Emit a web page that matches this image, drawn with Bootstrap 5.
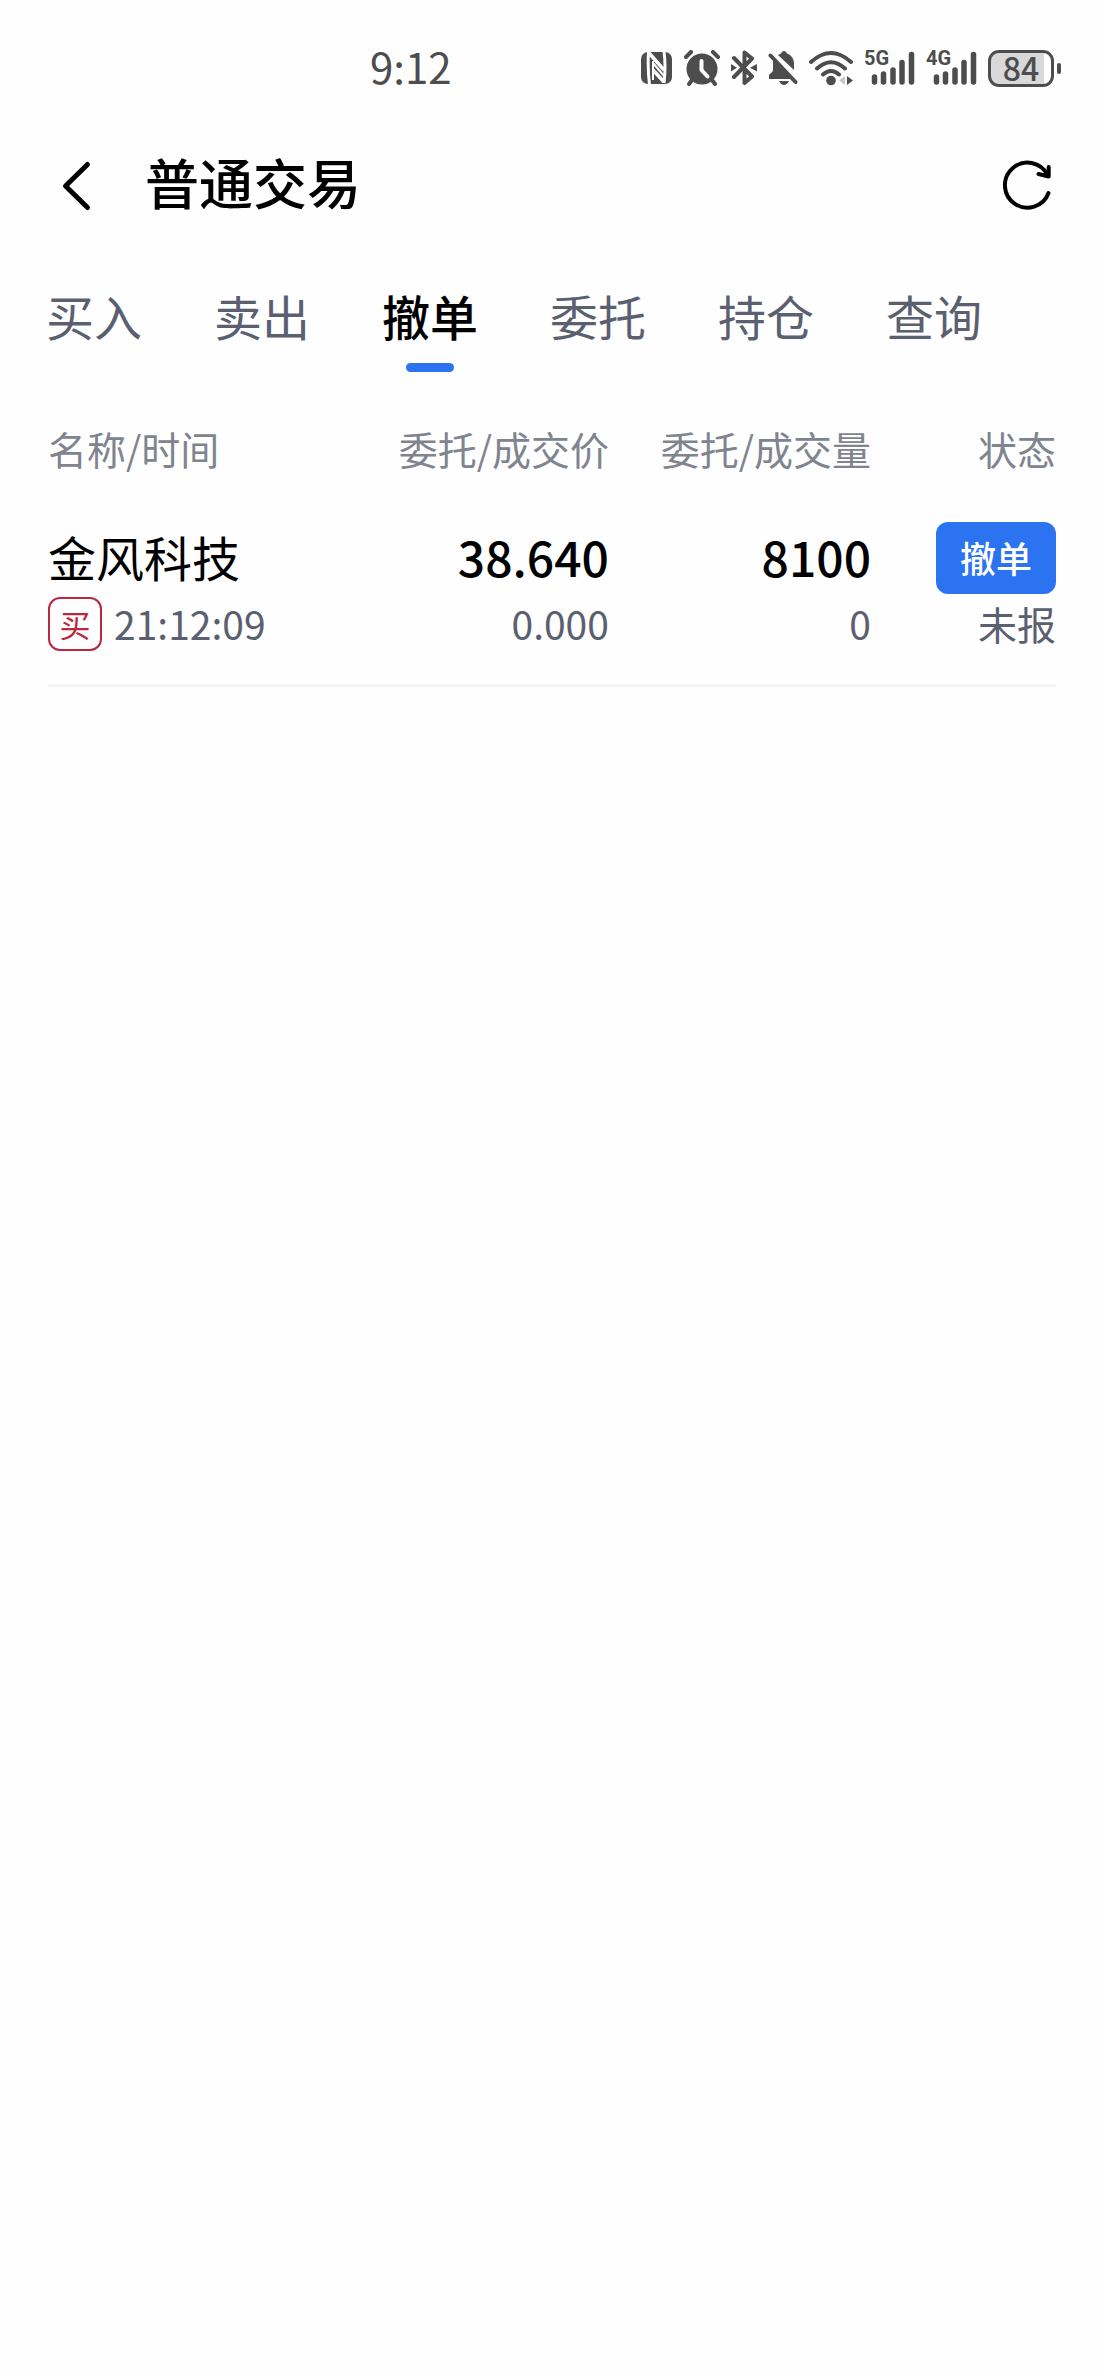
<!DOCTYPE html>
<html lang="zh-CN">
<head>
<meta charset="utf-8">
<meta name="viewport" content="width=device-width, initial-scale=1">
<title>普通交易</title>
<link href="https://cdn.jsdelivr.net/npm/bootstrap@5.3.0/dist/css/bootstrap.min.css" rel="stylesheet">
<style>
:root { --ink: #4d4d4d; --slate: #5b6070; --muted: #80848f; --blue: #2b73f0; --red: #b8283f; }
body { font-family: "Noto Sans CJK SC", "Noto Sans", sans-serif; color: #000; background: #fefefe; }
.semi { font-weight: 500; }
.status-bar { height: 136px; padding: 0 43px 0 370px; color: var(--ink); }
.status-icons { gap: 11px; }
.clock { font-size: 42px; line-height: 48px; padding-bottom: 4px; }
.net-label { font: bold 20px/22px "Liberation Sans Narrow", "Roboto", sans-serif; top: -3px; left: 0; }
.battery { width: 66px; height: 37px; border: 3px solid var(--ink); border-radius: 11px; background: linear-gradient(to right, #d9d9d9 88%, transparent 88%); font-size: 32px; line-height: 28px; padding-bottom: 3px; }
.battery-tip { width: 4px; height: 11px; border-radius: 2px; background: var(--ink); margin-left: 3px; }
.title-bar { height: 100px; padding: 0 47px 0 60px; }
.title-bar h1 { font-size: 54px; line-height: 60px; margin-left: 52px; padding-bottom: 8px; }
.trade-tabs { gap: 72px; padding: 43px 46px 0; }
.trade-tabs .nav-link { padding: 0; font-size: 48px; line-height: 72px; color: var(--slate); border: 0; }
.trade-tabs .nav-link.active { color: #000; }
.trade-tabs .nav-link::after { content: ""; display: block; width: 48px; height: 9px; margin: 12px auto 0; border-radius: 5px; }
.trade-tabs .nav-link.active::after { background: var(--blue); }
.orders { padding: 0 48px; }
.orders table { table-layout: fixed; width: 100%; }
.orders th { padding: 46px 0 44px; font-size: 39px; line-height: 60px; font-weight: 400; color: var(--muted); white-space: nowrap; }
.orders td { padding: 0 0 33px; border-bottom: 3px solid #f3f4f8; }
.c-price { width: 26%; } .c-qty { width: 26%; } .c-state { width: 185px; }
.line-a { height: 72px; font-size: 48px; line-height: 68px; }
.line-b { height: 54px; margin-top: 3px; font-size: 39px; line-height: 52px; color: var(--slate); }
.side-tag { width: 54px; height: 54px; border: 2px solid var(--red); border-radius: 12px; color: var(--red); font-size: 31px; line-height: 49px; margin-right: 12px; }
.btn-cancel { width: 120px; height: 72px; padding: 0 0 2px; border: 0; border-radius: 12px; background: var(--blue); color: #fff; font-size: 36px; line-height: 70px; }
</style>
</head>
<body>
<div class="status-bar d-flex align-items-center justify-content-between">
  <span class="clock">9:12</span>
  <div class="status-icons d-flex align-items-center">
    <svg width="32" height="34" viewBox="0 0 32 34" aria-hidden="true">
      <rect x="0" y="1" width="31" height="32" rx="7" fill="#4d4d4d"/>
      <path d="M7.500 1q-1 16 1 33M23 0q2 16 0 32" stroke="#fefefe" stroke-width="3" fill="none"/>
      <path d="M8 2 23 19M12 19 23 31" stroke="#fefefe" stroke-width="3.500" fill="none"/>
      <path d="M12 10v19M12 12l11 13" stroke="#fefefe" stroke-width="2" fill="none"/>
    </svg>
    <svg width="36" height="36" viewBox="0 0 36 36" aria-hidden="true">
      <circle cx="18" cy="19" r="15.500" fill="#4d4d4d"/>
      <path d="M2 7 7 2M29 2l5 5M8 30l-3 4M28 30l3 4" stroke="#4d4d4d" stroke-width="4" stroke-linecap="round"/>
      <path d="M17.500 11v9l6 6.500" fill="none" stroke="#fefefe" stroke-width="4" stroke-linecap="round" stroke-linejoin="round"/>
    </svg>
    <svg width="26" height="36" viewBox="0 0 26 36" aria-hidden="true">
      <path d="M3 8 21 26.500 13.500 33V22M3 27 21 8.500 13.500 2.500V13" fill="none" stroke="#4d4d4d" stroke-width="4" stroke-linecap="round" stroke-linejoin="round"/>
      <path d="M0 14 6 17.700 0 21.500zM26 14 19 17.700 26 21.500z" fill="#4d4d4d"/>
    </svg>
    <svg width="30" height="36" viewBox="0 0 30 36" aria-hidden="true">
      <path d="M5 10 24 29H1v-4l4-4zM10 5l3-1.500c1-3.500 5-3.500 6 0 5 2 7 6 7 10V20z" fill="#4d4d4d"/>
      <path d="M2.500 5.500 27.500 32" stroke="#4d4d4d" stroke-width="4" stroke-linecap="round"/>
      <path d="M11 31h10q-2 4-5 4t-5-4z" fill="#4d4d4d"/>
    </svg>
    <svg width="44" height="36" viewBox="0 0 44 36" aria-hidden="true">
      <path d="M2 12q20-18 40 0M8 18.500q14-12.500 28 0M14 24.500q8-7 16 0" fill="none" stroke="#4d4d4d" stroke-width="4" stroke-linecap="round"/>
      <circle cx="22" cy="30.500" r="4.800" fill="#4d4d4d"/>
      <path d="M36 26v9l-6-4.500z" fill="#c8c8c8"/><path d="M38 26v9l6-4.500z" fill="#4d4d4d"/>
    </svg>
    <div class="position-relative d-flex">
      <svg width="51" height="36" viewBox="0 0 51 36" aria-hidden="true"><path d="M10.500 27v5M19.500 24v8M29 20v12M38 12.500V32M47.500 4.500V32" stroke="#4d4d4d" stroke-width="5.500" stroke-linecap="round"/></svg>
      <span class="net-label position-absolute">5G</span>
    </div>
    <div class="position-relative d-flex">
      <svg width="51" height="36" viewBox="0 0 51 36" aria-hidden="true"><path d="M10.500 27v5M19.500 24v8M29 20v12M38 12.500V32M47.500 4.500V32" stroke="#4d4d4d" stroke-width="5.500" stroke-linecap="round"/></svg>
      <span class="net-label position-absolute">4G</span>
    </div>
    <div class="d-flex align-items-center">
      <div class="battery semi d-flex align-items-center justify-content-center">84</div>
      <div class="battery-tip"></div>
    </div>
  </div>
</div>

<header class="title-bar d-flex align-items-center">
  <button class="btn p-0 border-0 d-flex" type="button" aria-label="返回">
    <svg width="33" height="54" viewBox="0 0 33 54" aria-hidden="true"><path d="M27.500 5.500 5.500 27 27.500 48.500" fill="none" stroke="#000" stroke-width="5" stroke-linecap="round" stroke-linejoin="round"/></svg>
  </button>
  <h1 class="semi mb-0">普通交易</h1>
  <button class="btn p-0 border-0 d-flex ms-auto" type="button" aria-label="刷新">
    <svg width="54" height="54" viewBox="0 0 54 54" aria-hidden="true"><path d="M45.500 34A22.500 22.500 0 1 1 44.500 16M45.700 8v9.500L35.500 15" fill="none" stroke="#000" stroke-width="4" stroke-linecap="round" stroke-linejoin="round"/></svg>
  </button>
</header>

<nav class="trade-tabs nav flex-nowrap text-nowrap">
  <a class="nav-link" href="#">买入</a>
  <a class="nav-link" href="#">卖出</a>
  <a class="nav-link active semi" href="#" aria-current="page">撤单</a>
  <a class="nav-link" href="#">委托</a>
  <a class="nav-link" href="#">持仓</a>
  <a class="nav-link" href="#">查询</a>
</nav>

<main class="orders">
  <table>
    <thead>
      <tr>
        <th scope="col">名称/时间</th>
        <th class="c-price text-end" scope="col">委托/成交价</th>
        <th class="c-qty text-end" scope="col">委托/成交量</th>
        <th class="c-state text-end" scope="col">状态</th>
      </tr>
    </thead>
    <tbody>
      <tr>
        <td>
          <div class="line-a">金风科技</div>
          <div class="line-b d-flex"><span class="side-tag text-center">买</span>21:12:09</div>
        </td>
        <td class="text-end"><div class="line-a semi">38.640</div><div class="line-b">0.000</div></td>
        <td class="text-end"><div class="line-a semi">8100</div><div class="line-b">0</div></td>
        <td class="text-end">
          <div class="line-a d-flex justify-content-end"><button class="btn btn-cancel semi" type="button">撤单</button></div>
          <div class="line-b">未报</div>
        </td>
      </tr>
    </tbody>
  </table>
</main>
<script src="https://cdn.jsdelivr.net/npm/bootstrap@5.3.0/dist/js/bootstrap.bundle.min.js"></script>
</body>
</html>
